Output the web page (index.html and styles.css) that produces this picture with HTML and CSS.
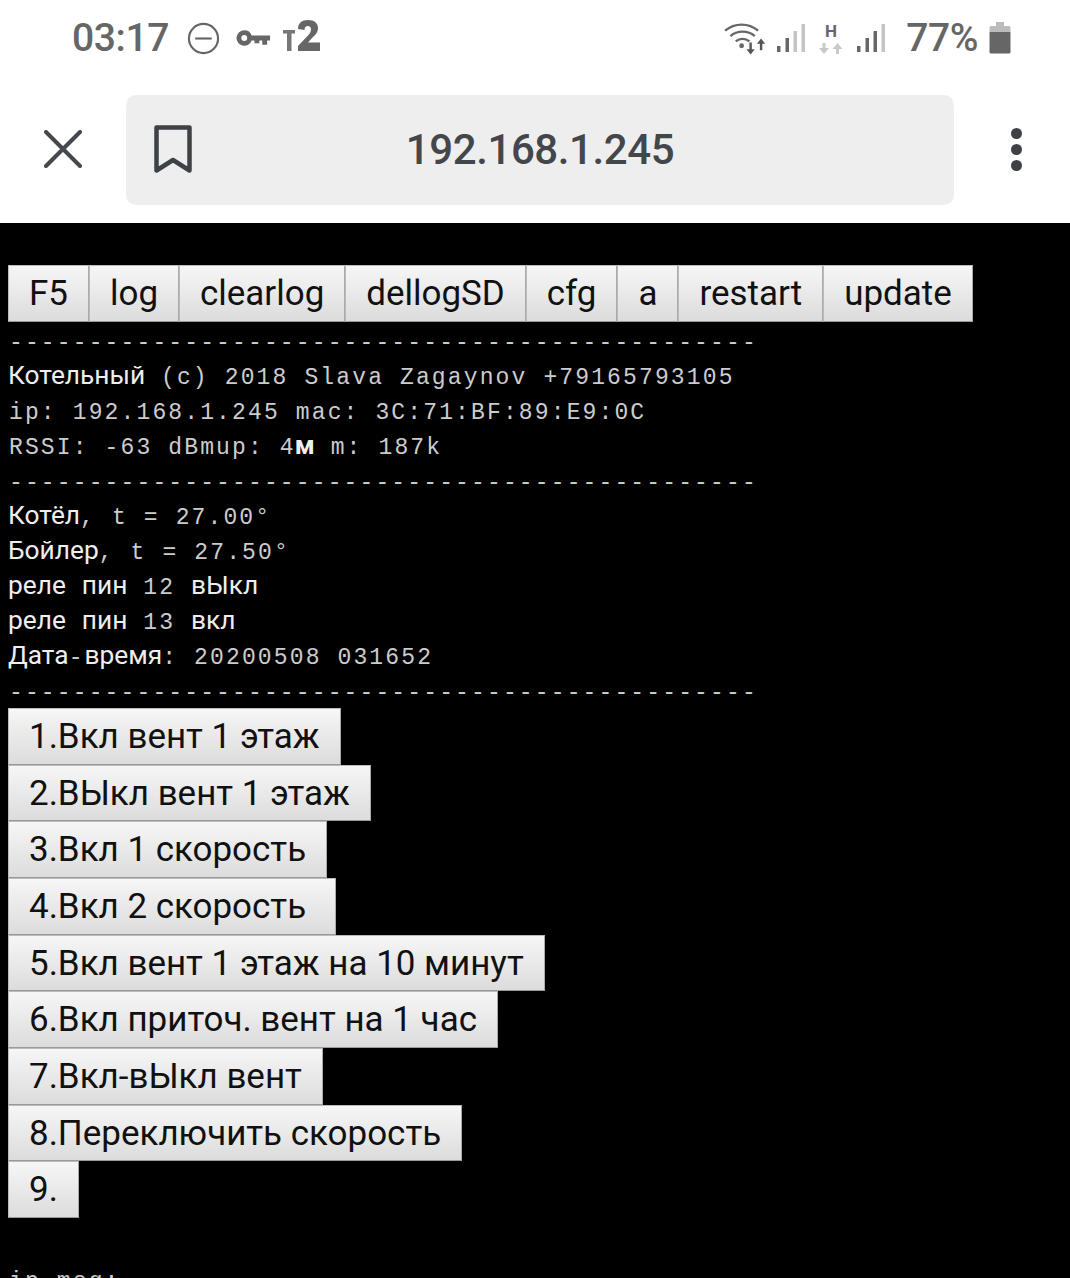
FILE: index.html
```html
<!DOCTYPE html>
<html lang="en">
<head>
    <meta charset="UTF-8">
    <meta name="viewport" content="width=device-width, initial-scale=1.0">
    <title>192.168.1.245</title>
    <link rel="stylesheet" href="styles.css">
</head>
<body>
    <div class="status-bar">
        <div class="status-left">
            <span class="clock">03:17</span>
            <svg class="icon-dnd" viewBox="0 0 34 34"><circle cx="17" cy="17" r="15" fill="none" stroke="#666" stroke-width="2.2"/><path d="M8.5 17h17" stroke="#666" stroke-width="2.2"/></svg>
            <svg class="icon-key" viewBox="0 0 36 18"><path fill="#666" fill-rule="evenodd" d="M8.5 1a8 8 0 0 1 7.6 5.5H35v5h-3v4.500h-5v-4.500h-3v3h-5v-3h-2.900A8 8 0 1 1 8.500 1zm0 5a3 3 0 1 0 0 6 3 3 0 0 0 0-6z"/></svg>
            <svg class="icon-t2" viewBox="0 0 38 34"><path fill="#777" d="M0 11h12v3.500H8.500V32h-4.500V14.500H0z"/><path fill="#666" d="M15 10c0-6 4-9 10-9 6.500 0 10 3.500 10 8 0 4-2 6.500-5 9l-5 5.500H37V32H15v-5l9.500-10c2-2 3.500-4 3.500-6.500 0-2.200-1.200-3.500-3.200-3.500-2.300 0-3.300 1.500-3.300 4z"/></svg>
        </div>
        <div class="status-right">
            <svg class="icon-wifi" viewBox="0 0 44 34"><g fill="none" stroke="#666" stroke-width="2.400"><path d="M1 9c10-8.500 24-8.500 34 0"/><path d="M6.500 14.500c7-6 18-6 25 0"/><path d="M12 20c4-3.500 10-3.500 14 0"/></g><circle cx="18" cy="24.500" r="2.500" fill="#666"/><path d="M26 21h2.500v7h3l-4.200 5.500-4.300-5.500h3zM38 17l4.300 5.500h-3V29h-2.500v-6.500h-3z" fill="#555"/></svg>
            <svg class="icon-signal" viewBox="0 0 28 30"><rect x="0" y="23" width="3.500" height="6" fill="#666"/><rect x="8.500" y="15" width="3.500" height="14" fill="#666"/><rect x="16.500" y="8" width="3.500" height="21" fill="#c4c4c4"/><rect x="24.500" y="1" width="3.500" height="28" fill="#c4c4c4"/></svg>
            <svg class="icon-net" viewBox="0 0 24 34"><text x="12" y="16" text-anchor="middle" class="net-h">H</text><path d="M3.500 22h3v5h3.500l-5 6-5-6h3.500zM18.500 22l5 6h-3.500v5h-3v-5h-3.500z" fill="#c9c9c9"/></svg>
            <svg class="icon-signal icon-signal-two" viewBox="0 0 28 30"><rect x="0" y="23" width="3.500" height="6" fill="#666"/><rect x="8.500" y="15" width="3.500" height="14" fill="#666"/><rect x="16.500" y="8" width="3.500" height="21" fill="#666"/><rect x="24.500" y="1" width="3.500" height="28" fill="#c4c4c4"/></svg>
            <span class="battery-text">77%</span>
            <svg class="icon-battery" viewBox="0 0 22 32"><path d="M7 0h8v4H7z" fill="#bbb"/><path d="M2 4h18a1.500 1.500 0 0 1 1.500 1.500V10H.5V5.500A1.500 1.500 0 0 1 2 4z" fill="#bbb"/><path d="M.5 10h21v20a1.500 1.500 0 0 1-1.500 1.500H2A1.500 1.500 0 0 1 .5 30z" fill="#666"/></svg>
        </div>
    </div>

    <div class="toolbar">
        <svg class="icon-close" viewBox="0 0 38 38"><path d="M2 2l34 34M36 2L2 36" stroke="#45484c" stroke-width="4" stroke-linecap="round"/></svg>
        <div class="url-box">
            <svg class="icon-bookmark" viewBox="0 0 38 48"><path d="M2.500 2.500h33v43L19 35 2.500 45.500z" fill="none" stroke="#3e4145" stroke-width="4.500" stroke-linejoin="round"/></svg>
            <span class="url-text">192.168.1.245</span>
        </div>
        <div class="menu-dots">
            <span class="dot"></span>
            <span class="dot"></span>
            <span class="dot"></span>
        </div>
    </div>

    <div class="page">
        <div class="top-buttons">
            <a class="btn">F5</a>
            <a class="btn">log</a>
            <a class="btn">clearlog</a>
            <a class="btn">dellogSD</a>
            <a class="btn">cfg</a>
            <a class="btn">a</a>
            <a class="btn">restart</a>
            <a class="btn">update</a>
        </div>

        <div class="console">
            <div>-----------------------------------------------</div>
            <div><span class="ru">Котельный</span> (c) 2018 Slava Zagaynov +79165793105</div>
            <div>ip: 192.168.1.245 mac: 3C:71:BF:89:E9:0C</div>
            <div>RSSI: -63 dBmup: 4<span class="ru ru-bold">м</span> m: 187k</div>
            <div>-----------------------------------------------</div>
            <div><span class="ru">Котёл</span>, t = 27.00°</div>
            <div><span class="ru">Бойлер</span>, t = 27.50°</div>
            <div><span class="ru">реле</span> <span class="ru">пин</span> 12 <span class="ru">вЫкл</span></div>
            <div><span class="ru">реле</span> <span class="ru">пин</span> 13 <span class="ru">вкл</span></div>
            <div><span class="ru">Дата</span>-<span class="ru">время</span>: 20200508 031652</div>
            <div>-----------------------------------------------</div>
        </div>

        <div class="action-buttons">
            <a class="btn">1.Вкл вент 1 этаж</a>
            <a class="btn">2.ВЫкл вент 1 этаж</a>
            <a class="btn">3.Вкл 1 скорость</a>
            <a class="btn">4.Вкл 2 скорость&nbsp;</a>
            <a class="btn">5.Вкл вент 1 этаж на 10 минут</a>
            <a class="btn">6.Вкл приточ. вент на 1 час</a>
            <a class="btn">7.Вкл-вЫкл вент</a>
            <a class="btn">8.Переключить скорость</a>
            <a class="btn">9.</a>
        </div>

        <div class="console ip-msg"><div>ip msg:</div></div>
    </div>
</body>
</html>
```

FILE: styles.css
```css
html, body {
    margin: 0;
    padding: 0;
    height: 1278px;
    overflow: hidden;
}

body {
    font-family: Roboto, sans-serif;
    background-color: #000;
}

.status-bar {
    height: 75px;
    box-sizing: border-box;
    background: #fff;
    display: flex;
    align-items: center;
    justify-content: space-between;
    padding: 1px 59px 0 72px;
}

.status-left,
.status-right {
    display: flex;
    align-items: center;
}

.clock {
    font-size: 39px;
    font-weight: 500;
    letter-spacing: -0.4px;
    color: #666;
}

.icon-dnd {
    width: 33px;
    height: 33px;
    margin-left: 18px;
}

.icon-key {
    width: 35px;
    height: 18px;
    margin-left: 16px;
}

.icon-t2 {
    width: 38px;
    height: 34px;
    margin-left: 12px;
    margin-top: -4px;
}

.icon-wifi {
    width: 43px;
    height: 33px;
}

.icon-signal {
    width: 28px;
    height: 30px;
    margin-left: 10px;
}

.icon-signal-two {
    margin-left: 14px;
}

.icon-net {
    width: 24px;
    height: 34px;
    margin-left: 14px;
}

.net-h {
    font: bold 17px Roboto, sans-serif;
    fill: #666;
}

.battery-text {
    font-size: 39px;
    font-weight: 500;
    letter-spacing: -0.4px;
    color: #666;
    margin-left: 21px;
}

.icon-battery {
    width: 22px;
    height: 32px;
    margin-left: 11px;
}

.toolbar {
    height: 148px;
    background: #fff;
    display: flex;
    align-items: flex-start;
    padding-top: 20px;
    box-sizing: border-box;
}

.icon-close {
    width: 38px;
    height: 38px;
    margin: 35px 0 0 44px;
}

.url-box {
    width: 828px;
    height: 110px;
    box-sizing: border-box;
    padding-bottom: 2px;
    margin-left: 44px;
    background: #eeeeee;
    border-radius: 10px;
    position: relative;
    display: flex;
    align-items: center;
    justify-content: center;
}

.icon-bookmark {
    position: absolute;
    left: 28px;
    top: 30px;
    width: 38px;
    height: 48px;
}

.url-text {
    font-size: 42px;
    font-weight: 500;
    letter-spacing: -0.4px;
    color: #43464a;
}

.menu-dots {
    display: flex;
    flex-direction: column;
    gap: 5px;
    margin: 33px 0 0 57px;
}

.dot {
    width: 11px;
    height: 11px;
    border-radius: 50%;
    background: #3e4145;
}

.page {
    padding: 42px 8px 0;
}

.top-buttons {
    display: flex;
}

.action-buttons {
    display: flex;
    flex-direction: column;
    align-items: flex-start;
}

.btn {
    display: block;
    box-sizing: border-box;
    height: 56.7px;
    line-height: 55px;
    padding: 0 20px;
    font-size: 34.96px;
    color: #111;
    white-space: nowrap;
    background: linear-gradient(#f6f6f6, #dcdcdc);
    border: 1px solid;
    border-color: #bbb #aaa #999 #bbb;
}

.console {
    font-family: "Liberation Mono", monospace;
    font-size: 23px;
    line-height: 35px;
    letter-spacing: 2.130px;
    color: #ccc;
    margin: 4.6px 0 -3.3px;
    padding-left: 1px;
}

.console div {
    height: 35px;
    white-space: pre;
}

.ru {
    font-family: Roboto, sans-serif;
    font-size: 26.3px;
    line-height: 0;
    letter-spacing: 0;
    color: #eee;
}

.console div > .ru:first-child {
    margin-left: -1px;
}

.ru-bold {
    font-weight: 700;
}

.ip-msg {
    margin-top: 47px;
}
```
